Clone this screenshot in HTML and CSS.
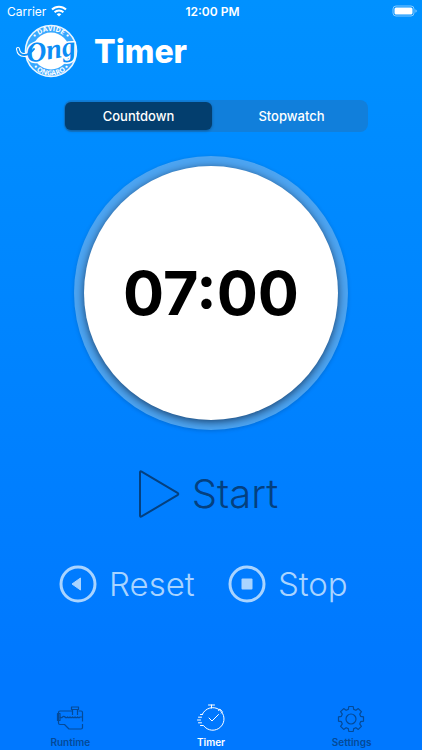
FILE: index.html
```html
<!DOCTYPE html>
<html lang="en">
<head>
    <meta charset="UTF-8">
    <meta name="viewport" content="width=device-width, initial-scale=1">
    <title>Timer</title>
    <link rel="stylesheet" href="styles.css">
</head>
<body>

<div class="status-bar">
    <div class="carrier">
        <span>Carrier</span>
        <svg width="16" height="12" viewBox="0 0 16 12" fill="none" stroke="#fff" stroke-width="2">
            <path d="M1 4.5a10 10 0 0 1 14 0M3.6 7.2a6.3 6.3 0 0 1 8.8 0"/>
            <path d="M8 11.6L5.7 9.3a3.3 3.3 0 0 1 4.6 0z" fill="#fff" stroke="none"/>
        </svg>
    </div>
    <span class="clock">12:00 PM</span>
    <div class="battery">
        <svg width="26" height="12" viewBox="0 0 26 12">
            <rect x="1" y="1" width="21" height="10" rx="3" fill="none" stroke="#fff" stroke-opacity=".5"/>
            <rect x="2.5" y="2.5" width="18" height="7" rx="1.5" fill="#fff"/>
            <path d="M23.5 4.2a2 2 0 0 1 0 3.6z" fill="#fff" fill-opacity=".6"/>
        </svg>
    </div>
</div>

<header class="header">
    <svg class="logo" width="64" height="56" viewBox="0 0 64 56">
        <defs>
            <path id="arc-top" d="M15 28a20 20 0 0 1 40 0"/>
            <path id="arc-bottom" d="M10.5 28a24.5 24.5 0 0 0 49 0"/>
        </defs>
        <circle cx="35" cy="28" r="25.5" fill="#fff" fill-opacity=".22" stroke="#e8f5ff" stroke-width="1.6"/>
        <circle cx="35" cy="28" r="18.5" fill="#fff"/>
        <text class="logo-ring"><textPath href="#arc-top" startOffset="50%">• DAVIDE •</textPath></text>
        <text class="logo-ring"><textPath href="#arc-bottom" startOffset="50%">• ONGARO •</textPath></text>
        <path class="swash-edge" d="M2 26c1 8 10 8 16 0"/>
        <text class="logo-name" x="35" y="36" transform="rotate(-9 34 28)">Ong</text>
        <path class="swash" d="M2 26c1 8 10 8 16 0"/>
    </svg>
    <h1>Timer</h1>
</header>

<main class="content">
    <div class="segmented">
        <button type="button" class="segment active" aria-pressed="true">Countdown</button>
        <button type="button" class="segment" aria-pressed="false">Stopwatch</button>
    </div>

    <div class="dial">
        <div class="dial-face">07:00</div>
    </div>

    <button type="button" class="action start">
        <svg width="42" height="50" viewBox="0 0 42 50" fill="none" stroke="currentColor" stroke-width="2" stroke-linejoin="round">
            <path d="M2 3.5v43q0 1.8 1.6.9L39.5 26.2q1.6-1.2 0-2.4L3.6 2.6Q2 1.7 2 3.5z"/>
        </svg>
        <span>Start</span>
    </button>

    <div class="secondary">
        <button type="button" class="action">
            <svg width="38" height="38" viewBox="0 0 38 38">
                <circle cx="19" cy="19" r="17" fill="none" stroke="currentColor" stroke-width="3"/>
                <path d="M13 19l8.5-6v12z" fill="currentColor" stroke="currentColor" stroke-linejoin="round"/>
            </svg>
            <span>Reset</span>
        </button>
        <button type="button" class="action">
            <svg width="38" height="38" viewBox="0 0 38 38">
                <circle cx="19" cy="19" r="17" fill="none" stroke="currentColor" stroke-width="3"/>
                <rect x="13.5" y="13.5" width="11" height="11" rx="1" fill="currentColor"/>
            </svg>
            <span>Stop</span>
        </button>
    </div>
</main>

<nav class="tab-bar">
    <a href="#runtime" class="tab">
        <svg width="30" height="30" viewBox="0 0 30 30" fill="none" stroke="currentColor" stroke-width="1.2" stroke-linejoin="round">
            <path d="M17.5 8H5Q3.500 8 3.500 9.500V20q0 1.500 1.500 1.500h4.500l4.500 4.500H26q1.500 0 1.500-1.500v-3.500M27.500 18.500V9.500Q27.500 8 26 8h-2.500"/>
            <path d="M17.500 12V6.500h5V12M16.500 4h7v2.500h-7zM3.500 10.500h-1v7h2.500v-7z"/>
            <path d="M5 14q1.200 1.400 2.500 0t2.500 0q1.200 1.400 2.500 0 1.200 1.400 2.500 0 1.200 1.400 2.500 0 1.200 1.400 2.500 0 1.200 1.400 2.500 0 1.200 1.400 2.500 0h2"/>
        </svg>
        <span>Runtime</span>
    </a>
    <a href="#timer" class="tab active" aria-current="page">
        <svg width="30" height="30" viewBox="0 0 30 30" fill="none" stroke="currentColor" stroke-linecap="round">
            <path d="M6.500 11A11.300 11.300 0 1 1 7.500 22.500H4.500M6.500 11.500H4.500"/>
            <path d="M12.500 2h6M15.500 2v3M22.500 7.500l1.300-1.500 2.700 2.700-1.200 1.500M13 15l3 3 6.500-6.500"/>
            <path d="M2.500 14.200H5.500M1.500 17H4.500M2.500 19.800H5.500"/>
        </svg>
        <span>Timer</span>
    </a>
    <a href="#settings" class="tab">
        <svg width="30" height="30" viewBox="-14 -16 30 30" fill="none" stroke="currentColor" stroke-width="1.2" stroke-linejoin="round">
            <circle r="5"/>
            <path d="M-2.700-9.600L-2.200-12.500H2.200L2.700-9.600 4.900-8.700 7.300-10.400 10.400-7.300 8.700-4.900 9.600-2.700 12.500-2.200V2.200L9.600 2.700 8.700 4.900 10.400 7.300 7.300 10.400 4.900 8.700 2.700 9.600 2.200 12.500H-2.200L-2.700 9.600-4.900 8.700-7.300 10.400-10.400 7.300-8.700 4.900-9.600 2.700-12.500 2.200V-2.200L-9.600-2.700-8.700-4.900-10.400-7.300-7.300-10.400-4.900-8.700z"/>
        </svg>
        <span>Settings</span>
    </a>
</nav>

</body>
</html>
```
FILE: styles.css
```css
* {
    box-sizing: border-box;
}
body {
    margin: 0;
    min-height: 100vh;
    display: flex;
    flex-direction: column;
    font-family: Inter, "Liberation Sans", sans-serif;
    color: #fff;
    background: linear-gradient(#0091ff, #0078ff 90%);
}
button {
    padding: 0;
    border: none;
    background: none;
    color: inherit;
    font: inherit;
    cursor: pointer;
}
svg {
    display: block;
    flex: none;
}
.status-bar {
    display: grid;
    grid-template-columns: 1fr auto 1fr;
    align-items: center;
    height: 22px;
    padding: 0 4px 0 7px;
    font-size: 12px;
}
.carrier {
    display: flex;
    align-items: center;
    gap: 5px;
}
.clock {
    font-weight: 600;
}
.battery {
    justify-self: end;
}
.header {
    display: flex;
    align-items: center;
    gap: 14px;
    height: 58px;
    padding-left: 16px;
}
.header h1 {
    margin: 0;
    font-size: 32px;
    font-weight: 800;
}
.logo-ring {
    font-family: "Open Sans", sans-serif;
    font-size: 7px;
    font-weight: 700;
    fill: #fff;
    text-anchor: middle;
}
.logo-name {
    font-family: "Liberation Serif", serif;
    font-size: 28px;
    font-style: italic;
    font-weight: 700;
    fill: #0b8df5;
    stroke: #fff;
    stroke-width: 3px;
    stroke-linejoin: round;
    paint-order: stroke;
    text-anchor: middle;
}
.swash-edge {
    fill: none;
    stroke: #fff;
    stroke-width: 4px;
    stroke-linecap: round;
}
.swash {
    fill: none;
    stroke: #0b8df5;
    stroke-width: 2px;
    stroke-linecap: round;
}
.content {
    flex: 1;
    display: flex;
    flex-direction: column;
    align-items: center;
    padding-top: 20px;
}
.segmented {
    display: grid;
    grid-template-columns: 1fr 1fr;
    width: 72%;
    height: 32px;
    margin-left: 10px;
    padding: 2px 1px;
    border-radius: 8px;
    background: #117fdb;
}
.segment {
    border-radius: 6px;
    font-size: 13px;
    font-weight: 500;
}
.segment.active {
    margin-right: 4px;
    background: #033e6e;
    box-shadow: 0 1px 3px rgba(0,0,0,0.3);
}
.dial {
    width: 65%;
    aspect-ratio: 1;
    margin-top: 24px;
    padding: 10px;
    border-radius: 50%;
    background: #4da5f2;
    box-shadow: 0 1px 4px rgba(0,0,0,0.15);
}
.dial-face {
    display: flex;
    align-items: center;
    justify-content: center;
    height: 100%;
    border-radius: 50%;
    background: #fff;
    color: #000;
    font-size: 61px;
    font-weight: 700;
    box-shadow: 0 2px 9px rgba(0,20,50,0.7);
}
.action {
    display: flex;
    align-items: center;
    gap: 12px;
    color: #a9d4ff;
    font-size: 33px;
    font-weight: 300;
    line-height: 40px;
}
.start {
    margin: 39px 6px 0 0;
    color: #04407f;
    font-size: 40px;
    line-height: 50px;
}
.secondary {
    display: grid;
    grid-template-columns: 1fr 1fr;
    align-self: stretch;
    margin-top: 45px;
    padding: 0 6% 0 14%;
}
.tab-bar {
    display: grid;
    grid-template-columns: repeat(3, 1fr);
    height: 49px;
}
.tab {
    display: flex;
    flex-direction: column;
    align-items: center;
    gap: 3px;
    padding-top: 2px;
    color: #044a98;
    font-size: 10px;
    font-weight: 600;
    line-height: 12px;
    text-decoration: none;
}
.tab.active {
    color: #fff;
}
```
